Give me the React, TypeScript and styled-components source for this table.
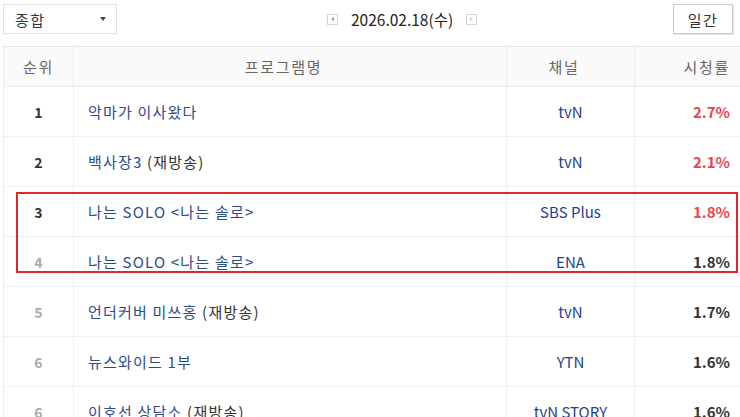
import React from "react";
import styled, { createGlobalStyle } from "styled-components";

const Global = createGlobalStyle`
  html, body { margin: 0; padding: 0; background: #fff; overflow: hidden; }
  body { font-family: "Noto Sans CJK KR", "Noto Sans", sans-serif; color: #333; }
`;

const Page = styled.div`
  width: 740px;
  padding: 4px 0 0 3px;
  box-sizing: border-box;
`;

const TopBar = styled.div`
  display: flex;
  align-items: center;
  height: 30px;
`;

const Select = styled.div`
  width: 114px;
  height: 30px;
  box-sizing: border-box;
  border: 1px solid #e1e1e1;
  display: flex;
  align-items: center;
  justify-content: space-between;
  padding: 0 10px 0 11px;
  font-size: 15px;
  letter-spacing: 1.5px;
  color: #333;
`;

const Caret = styled.span`
  width: 0;
  height: 0;
  border-left: 3px solid transparent;
  border-right: 3px solid transparent;
  border-top: 4px solid #444;
`;

const DateGroup = styled.div`
  display: flex;
  align-items: center;
  margin-left: 210px;
  gap: 13px;
  font-size: 15.5px;
  color: #222;
`;

const ArrowBox = styled.span<{ $dir: "left" | "right" }>`
  width: 11px;
  height: 11px;
  box-sizing: border-box;
  border: 1px solid #d4d4d4;
  display: flex;
  align-items: center;
  justify-content: center;
  &::after {
    content: "";
    width: 0;
    height: 0;
    border-top: 2.5px solid transparent;
    border-bottom: 2.5px solid transparent;
    ${(p) =>
      p.$dir === "left"
        ? "border-right: 3px solid #999;"
        : "border-left: 3px solid #ccc;"}
  }
`;

const PeriodButton = styled.div`
  margin-left: auto;
  margin-right: 7px;
  width: 60px;
  height: 30px;
  box-sizing: border-box;
  border: 1px solid #c9c9c9;
  box-shadow: 1px 1px 0 #e6e6e6;
  display: flex;
  align-items: center;
  justify-content: center;
  font-size: 15px;
  letter-spacing: 1.5px;
  color: #333;
`;

const TableWrap = styled.div`
  position: relative;
  margin-top: 12px;
  width: 740px;
`;

const Table = styled.table`
  border-collapse: collapse;
  table-layout: fixed;
  width: 740px;
`;

const HeadCell = styled.th<{ $align?: string }>`
  height: 39px;
  padding: 0 13px 0 0;
  line-height: 20px;
  background: #fafafa;
  border-top: 1px solid #e6e6e6;
  border-bottom: 1px solid #ececec;
  border-left: 1px solid #ececec;
  font-weight: 400;
  font-size: 15px;
  letter-spacing: 1.7px;
  color: #666;
  text-align: ${(p) => p.$align || "center"};
  &:first-child { padding: 0; }
`;

const Cell = styled.td<{ $align?: string }>`
  height: 49px;
  padding-top: 0;
  padding-bottom: 0;
  line-height: 20px;
  border-bottom: 1px solid #efefef;
  border-left: 1px solid #efefef;
  font-size: 15px;
  text-align: ${(p) => p.$align || "left"};
  white-space: nowrap;
  overflow: hidden;
`;

const RankCell = styled(Cell)<{ $top: boolean }>`
  text-align: center;
  font-weight: 700;
  font-size: 14px;
  color: ${(p) => (p.$top ? "#333" : "#aaa")};
`;

const TitleCell = styled(Cell)`
  padding-left: 14px;
  letter-spacing: 1.2px;
`;

const Title = styled.span`
  color: #2c4b8c;
`;

const Note = styled.span`
  color: #333;
`;

const ChannelCell = styled(Cell)`
  text-align: center;
  color: #1f3f8f;
`;

const RatingCell = styled(Cell)<{ $hot: boolean }>`
  text-align: right;
  padding-right: 13px;
  font-weight: 700;
  color: ${(p) => (p.$hot ? "#e8474c" : "#333")};
`;

const Highlight = styled.div`
  position: absolute;
  left: 13px;
  top: 146px;
  width: 722px;
  height: 81px;
  box-sizing: border-box;
  border: 2px solid #e3262e;
  pointer-events: none;
`;

type Row = { rank: number; title: string; note?: string; channel: string; rating: string };

const rows: Row[] = [
  { rank: 1, title: "악마가 이사왔다", channel: "tvN", rating: "2.7%" },
  { rank: 2, title: "백사장3", note: " (재방송)", channel: "tvN", rating: "2.1%" },
  { rank: 3, title: "나는 SOLO <나는 솔로>", channel: "SBS Plus", rating: "1.8%" },
  { rank: 4, title: "나는 SOLO <나는 솔로>", channel: "ENA", rating: "1.8%" },
  { rank: 5, title: "언더커버 미쓰홍", note: " (재방송)", channel: "tvN", rating: "1.7%" },
  { rank: 6, title: "뉴스와이드 1부", channel: "YTN", rating: "1.6%" },
  { rank: 6, title: "이호선 상담소", note: " (재방송)", channel: "tvN STORY", rating: "1.6%" },
];

export default function App() {
  return (
    <>
      <Global />
      <Page>
        <TopBar>
          <Select>
            종합
            <Caret />
          </Select>
          <DateGroup>
            <ArrowBox $dir="left" />
            2026.02.18(수)
            <ArrowBox $dir="right" />
          </DateGroup>
          <PeriodButton>일간</PeriodButton>
        </TopBar>
        <TableWrap>
          <Table>
            <colgroup>
              <col style={{ width: 70 }} />
              <col style={{ width: 433 }} />
              <col style={{ width: 128 }} />
              <col />
            </colgroup>
            <thead>
              <tr>
                <HeadCell>순위</HeadCell>
                <HeadCell>프로그램명</HeadCell>
                <HeadCell>채널</HeadCell>
                <HeadCell $align="right">시청률</HeadCell>
              </tr>
            </thead>
            <tbody>
              {rows.map((r, i) => (
                <tr key={i}>
                  <RankCell $top={r.rank <= 3}>{r.rank}</RankCell>
                  <TitleCell>
                    <Title>{r.title}</Title>
                    {r.note && <Note>{r.note}</Note>}
                  </TitleCell>
                  <ChannelCell>{r.channel}</ChannelCell>
                  <RatingCell $hot={i < 3}>{r.rating}</RatingCell>
                </tr>
              ))}
            </tbody>
          </Table>
          <Highlight />
        </TableWrap>
      </Page>
    </>
  );
}
